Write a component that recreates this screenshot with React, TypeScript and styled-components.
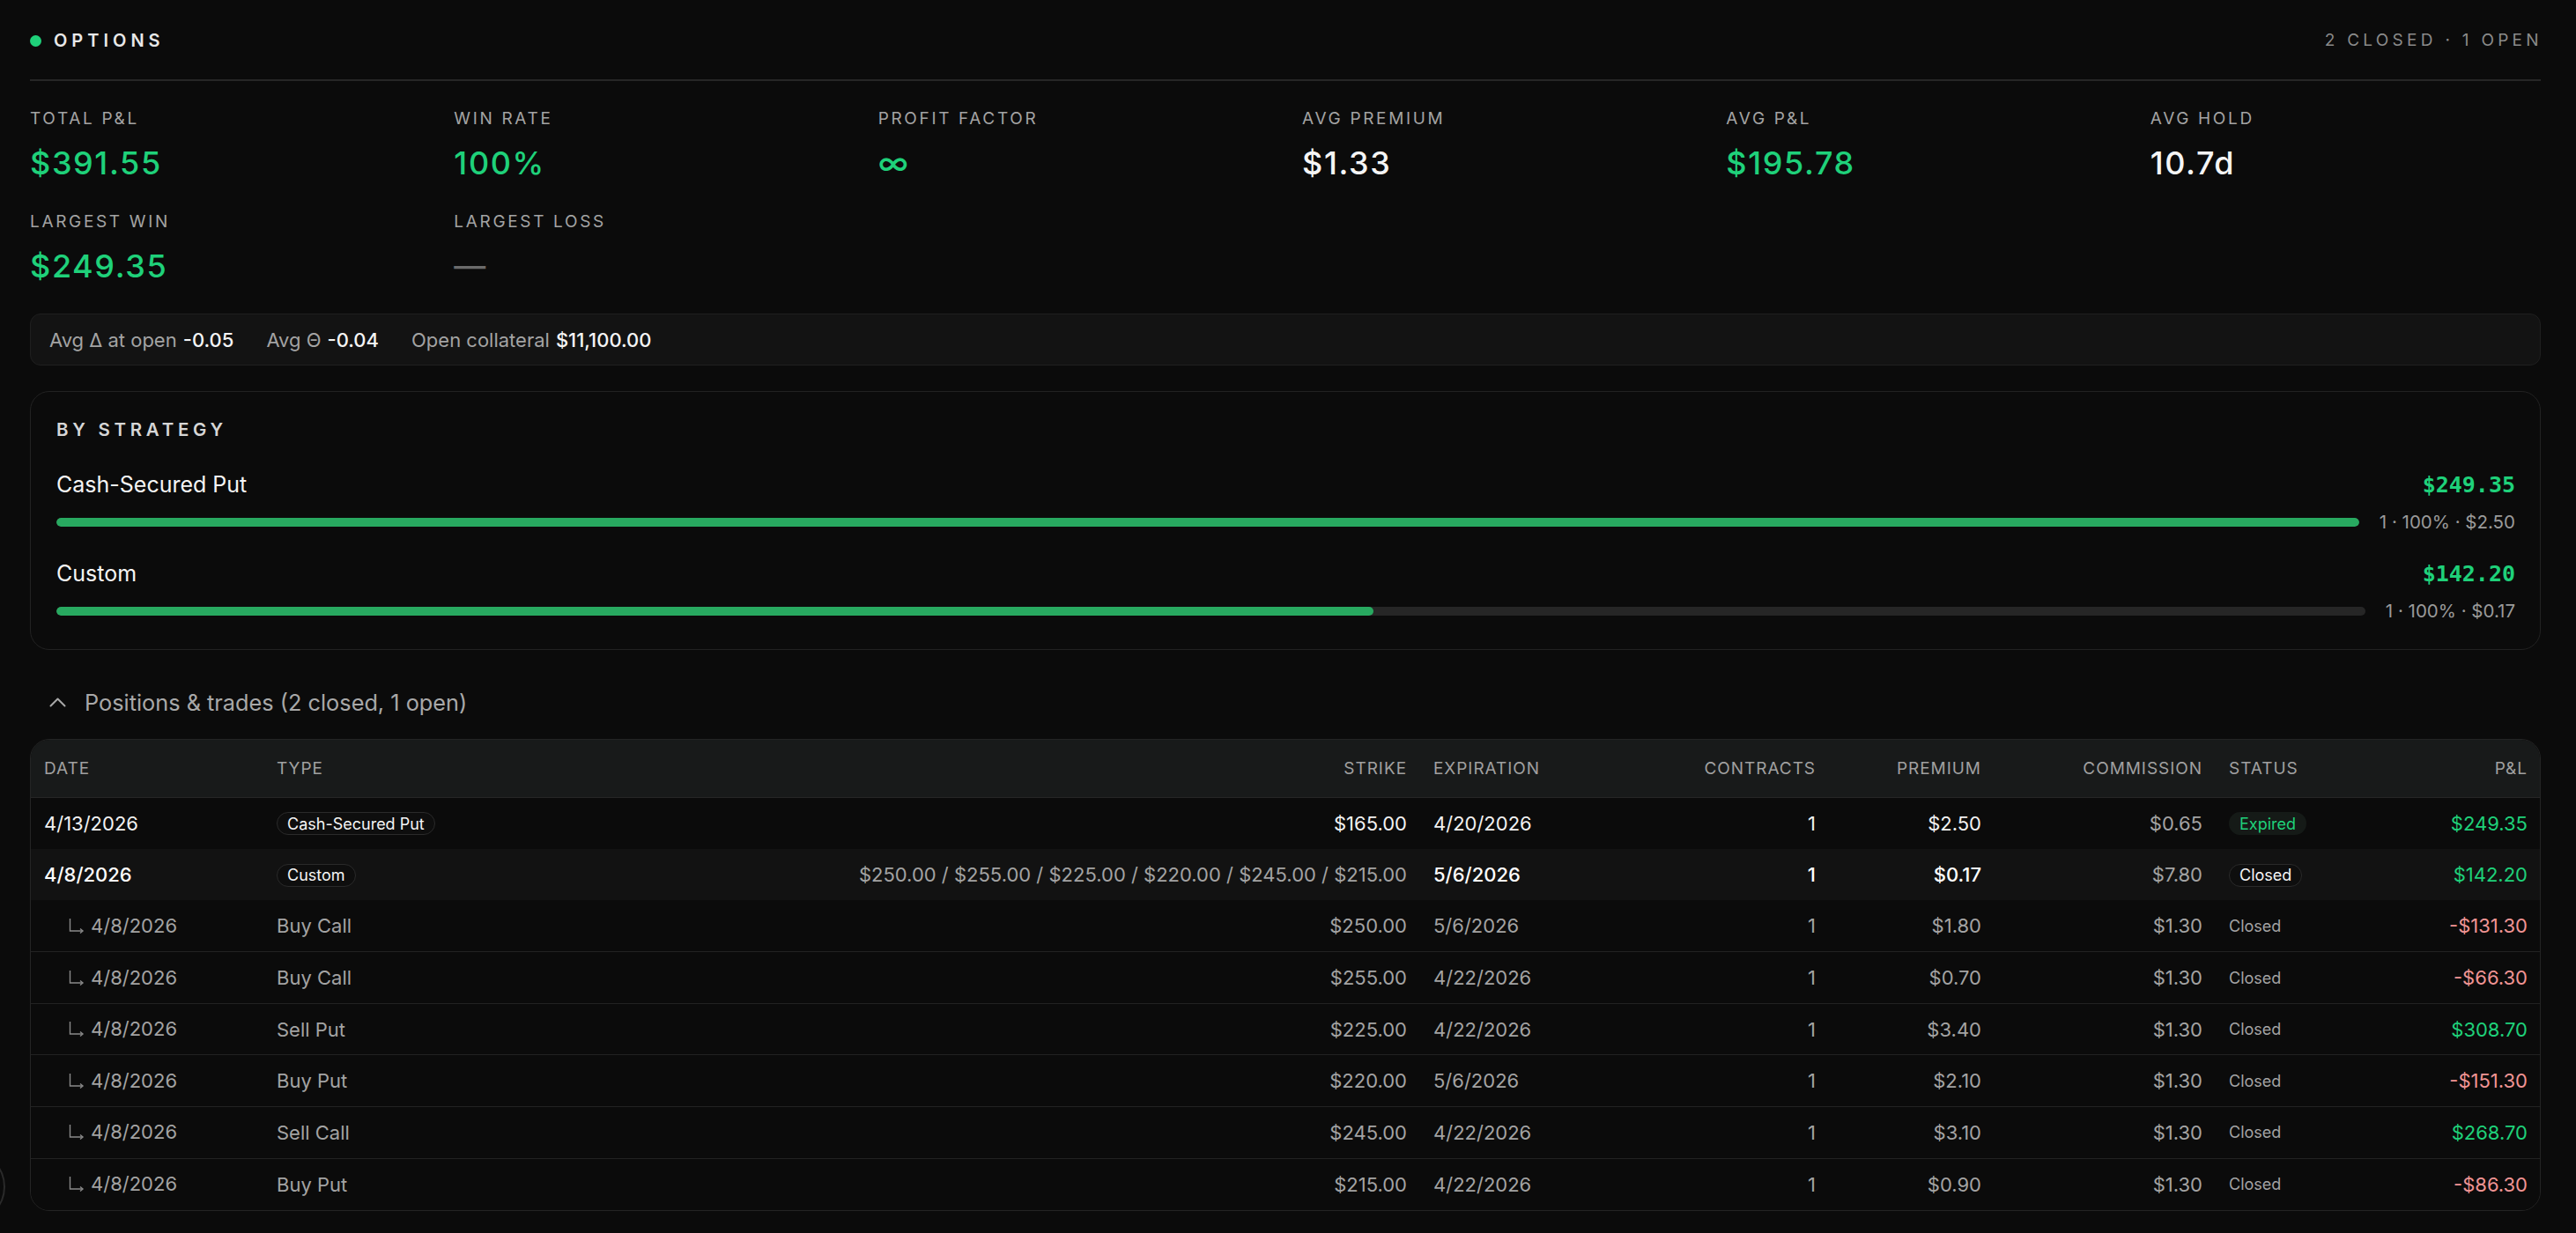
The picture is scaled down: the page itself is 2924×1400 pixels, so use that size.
import React from "react";
import styled, { createGlobalStyle, css } from "styled-components";

const GlobalStyle = createGlobalStyle`
  html, body { margin: 0; padding: 0; background: #0b0b0b; }
  body { font-family: Inter, "Noto Sans", Arial, sans-serif; color: #f2f2f2; -webkit-font-smoothing: antialiased; }
  * { box-sizing: border-box; }
`;

const GREEN = "#1fd17a";
const RED = "#f09494";

const Page = styled.div`
  min-height: 1400px;
  padding: 32px 40px 0 34px;
  background: #0b0b0b;
`;

const Header = styled.header`
  display: flex;
  align-items: center;
  justify-content: space-between;
  height: 60px;
  padding-bottom: 30px;
  border-bottom: 2px solid #262626;
`;

const Title = styled.div`
  display: flex;
  align-items: center;
  gap: 14px;
  font-size: 20px;
  line-height: 28px;
  font-weight: 600;
  letter-spacing: 0.25em;
  color: #e8e8e8;
`;

const Dot = styled.span`
  width: 13px;
  height: 13px;
  border-radius: 50%;
  background: ${GREEN};
`;

const HeaderMeta = styled.div`
  font-size: 19px;
  line-height: 28px;
  letter-spacing: 0.225em;
  margin-right: -0.1em;
  color: #8a8a8a;
`;

const StatsGrid = styled.section`
  margin-top: 31px;
  display: grid;
  grid-template-columns: repeat(6, 1fr);
  column-gap: 38px;
  row-gap: 33px;
`;

const Stat = styled.div`
  display: flex;
  flex-direction: column;
  gap: 16px;
`;

const StatLabel = styled.div`
  font-size: 19px;
  line-height: 24px;
  letter-spacing: 0.14em;
  color: #a3a3a3;
  text-transform: uppercase;
`;

const StatValue = styled.div<{ $tone: "green" | "white" | "muted" }>`
  font-size: 36px;
  line-height: 44px;
  font-weight: 500;
  letter-spacing: 0.045em;
  color: ${(p) => (p.$tone === "green" ? GREEN : p.$tone === "muted" ? "#6b6b6b" : "#f5f5f5")};
`;

const GreekBar = styled.div`
  margin-top: 32px;
  height: 59px;
  display: flex;
  align-items: center;
  gap: 37px;
  padding: 0 21px;
  background: #131313;
  border: 1px solid #1f1f1f;
  border-radius: 12px;
  font-size: 22px;
`;

const Greek = styled.span`
  color: #a3a3a3;
  b {
    font-weight: 500;
    color: #f5f5f5;
    margin-left: 7px;
  }
`;

const Card = styled.section`
  margin-top: 29px;
  border: 1px solid #222;
  border-radius: 22px;
  padding: 29px 28px 31px 29px;
  background: #0b0b0b;
`;

const CardTitle = styled.div`
  font-size: 20.5px;
  line-height: 28px;
  font-weight: 600;
  letter-spacing: 0.23em;
  color: #d6d6d6;
  margin-bottom: 32px;
`;

const StrategyList = styled.div`
  display: flex;
  flex-direction: column;
  gap: 30px;
`;

const Strategy = styled.div`
  display: flex;
  flex-direction: column;
  gap: 15px;
`;

const StrategyTop = styled.div`
  display: flex;
  justify-content: space-between;
  align-items: center;
  height: 32px;
`;

const StrategyName = styled.span`
  font-size: 25px;
  line-height: 32px;
  color: #f5f5f5;
`;

const StrategyValue = styled.span`
  font-family: "DejaVu Sans Mono", "Liberation Mono", monospace;
  font-weight: 700;
  font-size: 25px;
  color: ${GREEN};
`;

const StrategyBottom = styled.div`
  display: flex;
  align-items: center;
  gap: 23px;
  height: 24px;
`;

const Track = styled.div`
  flex: 1;
  height: 10px;
  border-radius: 5px;
  background: #262626;
  overflow: hidden;
`;

const Fill = styled.div`
  height: 100%;
  border-radius: 5px;
  background: #28a960;
`;

const StrategyMeta = styled.span`
  font-size: 20.5px;
  line-height: 24px;
  color: #9a9a9a;
  white-space: nowrap;
`;

const Toggle = styled.button`
  margin-top: 43px;
  display: flex;
  align-items: center;
  gap: 21px;
  height: 32px;
  padding: 0 0 0 22px;
  background: none;
  border: none;
  font-family: inherit;
  font-size: 25.3px;
  color: #a8a8a8;
  cursor: pointer;
`;

const TableWrap = styled.div`
  margin-top: 26px;
  border: 1px solid #242424;
  border-radius: 22px;
  overflow: hidden;
`;

const Table = styled.table`
  width: 100%;
  table-layout: fixed;
  border-collapse: collapse;
`;

const Th = styled.th<{ $right?: boolean }>`
  height: 65px;
  padding: 0 15px;
  background: #181a1a;
  font-size: 19px;
  font-weight: 400;
  letter-spacing: 0.05em;
  color: #a0a0a0;
  text-align: ${(p) => (p.$right ? "right" : "left")};
  border-bottom: 1px solid #262626;
`;

const Tr = styled.tr<{ $parent?: boolean }>`
  background: ${(p) => (p.$parent ? "#121212" : "#0b0b0b")};
  & + & td { border-top: 1px solid #222; }
`;

type Tone = "white" | "strong" | "muted" | "green" | "red";

const toneColor: Record<Tone, string> = {
  white: "#f2f2f2",
  strong: "#ffffff",
  muted: "#a3a3a3",
  green: GREEN,
  red: RED,
};

const Td = styled.td<{ $right?: boolean; $tone?: Tone; $small?: boolean }>`
  height: 58.6px;
  padding: 0 15px;
  font-size: ${(p) => (p.$small ? "18px" : "22px")};
  color: ${(p) => toneColor[p.$tone || "white"]};
  font-weight: ${(p) => (p.$tone === "strong" ? 500 : 400)};
  text-align: ${(p) => (p.$right ? "right" : "left")};
  white-space: nowrap;
  overflow: hidden;
`;

const Badge = styled.span<{ $variant: "outline" | "green" }>`
  display: inline-flex;
  align-items: center;
  height: 26px;
  padding: 0 11px;
  border-radius: 13px;
  font-size: 18px;
  ${(p) =>
    p.$variant === "green"
      ? css`
          background: #151a17;
          color: ${GREEN};
          border: 1px solid transparent;
        `
      : css`
          background: #0e0e0e;
          color: #f5f5f5;
          border: 1px solid #2a2a2a;
        `}
`;

const ChildDate = styled.span`
  display: inline-flex;
  align-items: center;
  gap: 7px;
  padding-left: 28px;
`;

const FloatingRing = styled.div`
  position: fixed;
  left: -77px;
  top: 1306px;
  width: 83px;
  height: 83px;
  border-radius: 50%;
  border: 2px solid #2a2a2a;
`;

const Chevron = () => (
  <svg width="19" height="11" viewBox="0 0 19 11" fill="none">
    <polyline points="1.5,9.5 9.5,1.5 17.5,9.5" stroke="#a8a8a8" strokeWidth="2" strokeLinecap="round" strokeLinejoin="round" />
  </svg>
);

const CornerArrow = () => (
  <svg width="18" height="18" viewBox="0 0 18 18" fill="none">
    <path d="M1.5 1v14H15" stroke="#8a8a8a" strokeWidth="1.4" />
    <path d="M13 12.5l3 2.5-3 2.5" stroke="#8a8a8a" strokeWidth="1.4" fill="none" />
  </svg>
);

const stats: { label: string; value: string; tone: "green" | "white" | "muted" }[] = [
  { label: "Total P&L", value: "$391.55", tone: "green" },
  { label: "Win rate", value: "100%", tone: "green" },
  { label: "Profit factor", value: "∞", tone: "green" },
  { label: "Avg premium", value: "$1.33", tone: "white" },
  { label: "Avg P&L", value: "$195.78", tone: "green" },
  { label: "Avg hold", value: "10.7d", tone: "white" },
  { label: "Largest win", value: "$249.35", tone: "green" },
  { label: "Largest loss", value: "—", tone: "muted" },
];

const strategies = [
  { name: "Cash-Secured Put", value: "$249.35", pct: 100, meta: "1 · 100% · $2.50" },
  { name: "Custom", value: "$142.20", pct: (142.2 / 249.35) * 100, meta: "1 · 100% · $0.17" },
];

const legs = [
  { type: "Buy Call", strike: "$250.00", exp: "5/6/2026", prem: "$1.80", pnl: "-$131.30" },
  { type: "Buy Call", strike: "$255.00", exp: "4/22/2026", prem: "$0.70", pnl: "-$66.30" },
  { type: "Sell Put", strike: "$225.00", exp: "4/22/2026", prem: "$3.40", pnl: "$308.70" },
  { type: "Buy Put", strike: "$220.00", exp: "5/6/2026", prem: "$2.10", pnl: "-$151.30" },
  { type: "Sell Call", strike: "$245.00", exp: "4/22/2026", prem: "$3.10", pnl: "$268.70" },
  { type: "Buy Put", strike: "$215.00", exp: "4/22/2026", prem: "$0.90", pnl: "-$86.30" },
];

const cols = [264, 400, 913, 288, 176, 188, 251, 185, 184];

export default function App() {
  return (
    <>
      <GlobalStyle />
      <Page>
        <Header>
          <Title>
            <Dot />
            OPTIONS
          </Title>
          <HeaderMeta>2 CLOSED · 1 OPEN</HeaderMeta>
        </Header>

        <StatsGrid>
          {stats.map((s) => (
            <Stat key={s.label}>
              <StatLabel>{s.label}</StatLabel>
              <StatValue $tone={s.tone}>{s.value}</StatValue>
            </Stat>
          ))}
        </StatsGrid>

        <GreekBar>
          <Greek>
            Avg Δ at open<b>-0.05</b>
          </Greek>
          <Greek>
            Avg Θ<b>-0.04</b>
          </Greek>
          <Greek>
            Open collateral<b>$11,100.00</b>
          </Greek>
        </GreekBar>

        <Card>
          <CardTitle>BY STRATEGY</CardTitle>
          <StrategyList>
            {strategies.map((s) => (
              <Strategy key={s.name}>
                <StrategyTop>
                  <StrategyName>{s.name}</StrategyName>
                  <StrategyValue>{s.value}</StrategyValue>
                </StrategyTop>
                <StrategyBottom>
                  <Track>
                    <Fill style={{ width: `${s.pct}%` }} />
                  </Track>
                  <StrategyMeta>{s.meta}</StrategyMeta>
                </StrategyBottom>
              </Strategy>
            ))}
          </StrategyList>
        </Card>

        <Toggle>
          <Chevron />
          Positions &amp; trades (2 closed, 1 open)
        </Toggle>

        <TableWrap>
          <Table>
            <colgroup>
              {cols.map((w, i) => (
                <col key={i} style={{ width: w }} />
              ))}
            </colgroup>
            <thead>
              <tr>
                <Th>DATE</Th>
                <Th>TYPE</Th>
                <Th $right>STRIKE</Th>
                <Th>EXPIRATION</Th>
                <Th $right>CONTRACTS</Th>
                <Th $right>PREMIUM</Th>
                <Th $right>COMMISSION</Th>
                <Th>STATUS</Th>
                <Th $right>P&amp;L</Th>
              </tr>
            </thead>
            <tbody>
              <Tr>
                <Td>4/13/2026</Td>
                <Td>
                  <Badge $variant="outline">Cash-Secured Put</Badge>
                </Td>
                <Td $right>$165.00</Td>
                <Td>4/20/2026</Td>
                <Td $right>1</Td>
                <Td $right>$2.50</Td>
                <Td $right $tone="muted">$0.65</Td>
                <Td>
                  <Badge $variant="green">Expired</Badge>
                </Td>
                <Td $right $tone="green">$249.35</Td>
              </Tr>
              <Tr $parent>
                <Td $tone="strong">4/8/2026</Td>
                <Td>
                  <Badge $variant="outline">Custom</Badge>
                </Td>
                <Td $right $tone="muted">
                  $250.00 / $255.00 / $225.00 / $220.00 / $245.00 / $215.00
                </Td>
                <Td $tone="strong">5/6/2026</Td>
                <Td $right $tone="strong">1</Td>
                <Td $right $tone="strong">$0.17</Td>
                <Td $right $tone="muted">$7.80</Td>
                <Td>
                  <Badge $variant="outline">Closed</Badge>
                </Td>
                <Td $right $tone="green">$142.20</Td>
              </Tr>
              {legs.map((l, i) => (
                <Tr key={i}>
                  <Td $tone="muted">
                    <ChildDate>
                      <CornerArrow />
                      4/8/2026
                    </ChildDate>
                  </Td>
                  <Td $tone="muted">{l.type}</Td>
                  <Td $right $tone="muted">{l.strike}</Td>
                  <Td $tone="muted">{l.exp}</Td>
                  <Td $right $tone="muted">1</Td>
                  <Td $right $tone="muted">{l.prem}</Td>
                  <Td $right $tone="muted">$1.30</Td>
                  <Td $tone="muted" $small>Closed</Td>
                  <Td $right $tone={l.pnl.startsWith("-") ? "red" : "green"}>{l.pnl}</Td>
                </Tr>
              ))}
            </tbody>
          </Table>
        </TableWrap>
        <FloatingRing />
      </Page>
    </>
  );
}
